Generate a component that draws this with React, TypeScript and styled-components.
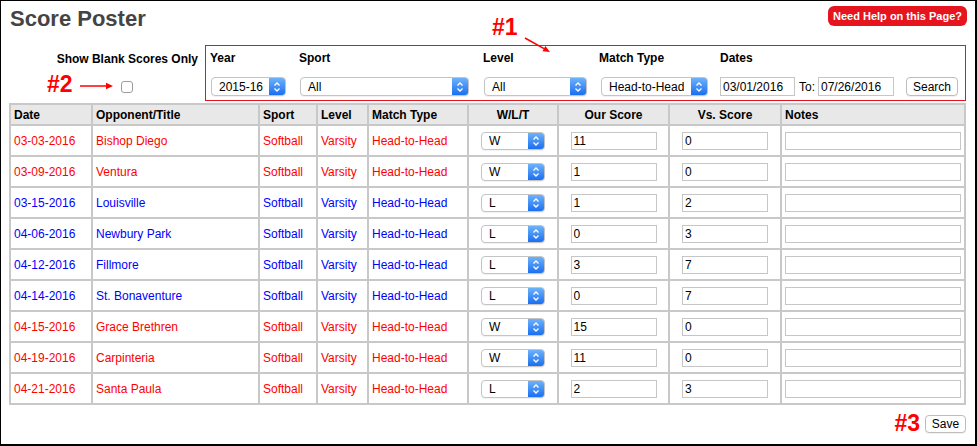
import React from 'react';
import styled, { createGlobalStyle } from 'styled-components';

const GlobalStyle = createGlobalStyle`
  html, body { margin: 0; padding: 0; background: #fff; }
  body { font-family: "Liberation Sans", Arial, Helvetica, sans-serif; color: #000; }
  * { box-sizing: border-box; }
`;

const FONT = `"Liberation Sans", Arial, Helvetica, sans-serif`;

const Frame = styled.div`
  position: relative;
  width: 977px;
  height: 446px;
  border: 1px solid #000;
  border-right-width: 2px;
  border-bottom-width: 2px;
  padding: 0 9px 0 8px;
  overflow: hidden;
`;

const TopBar = styled.div`
  display: flex;
  justify-content: space-between;
  align-items: flex-start;
  height: 44px;
`;

const Title = styled.h1`
  margin: 5px 0 0 1px;
  font-size: 22px;
  line-height: 26px;
  font-weight: bold;
  color: #444;
`;

const HelpButton = styled.button`
  margin: 5px -1px 0 0;
  height: 20px;
  padding: 0 5px;
  border: none;
  border-radius: 6px;
  background: #e6141e;
  color: #fff;
  font: bold 11px ${FONT};
  cursor: pointer;
`;

const FilterRow = styled.div`
  display: flex;
  height: 56px;
`;

const BlankBlock = styled.div`
  width: 196px;
  display: flex;
  justify-content: flex-end;
  padding-right: 7px;
`;

const BlankInner = styled.div`
  display: flex;
  flex-direction: column;
  align-items: center;
  padding-top: 7px;
`;

const BoldLabel = styled.label`
  font-weight: bold;
  font-size: 12px;
  line-height: 14px;
  height: 14px;
  white-space: nowrap;
`;

const Checkbox = styled.input`
  appearance: none;
  -webkit-appearance: none;
  width: 12px;
  height: 12px;
  margin: 15px 0 0;
  border: 1px solid #9c9c9c;
  border-radius: 3px;
  background: #fff;
`;

const FilterBox = styled.div`
  flex: 1;
  border: 1px solid #e6141e;
  padding: 5px 0 0 4px;
  display: flex;
  align-items: flex-start;
`;

const Field = styled.div<{ $w?: number }>`
  ${(p) => (p.$w ? `width: ${p.$w}px;` : 'flex: 1;')}
  display: flex;
  flex-direction: column;
  gap: 12px;
`;

const Controls = styled.div`
  display: flex;
  align-items: center;
  height: 19px;
`;

const SelectWrap = styled.span<{ $w: number; $h?: number; $ml?: number }>`
  display: inline-flex;
  width: ${(p) => p.$w}px;
  height: ${(p) => p.$h ?? 19}px;
  margin-left: ${(p) => p.$ml ?? 0}px;
  border: 1px solid #c4c4c4;
  border-radius: 4px;
  background: #fff;
  overflow: hidden;
  box-shadow: 0 1px 1px rgba(0, 0, 0, 0.06);
`;

const NativeSelect = styled.select`
  appearance: none;
  -webkit-appearance: none;
  flex: 1;
  min-width: 0;
  height: 100%;
  margin: 0;
  padding: 0 0 0 7px;
  border: none;
  background: transparent;
  font: 12px ${FONT};
  color: #000;
  outline: none;
`;

const SelectArrow = styled.span`
  flex: none;
  width: 16px;
  display: flex;
  align-items: center;
  justify-content: center;
  background: linear-gradient(#6db2fa, #1b6ff2);
`;

const TextInput = styled.input<{ $w?: number; $h?: number }>`
  width: ${(p) => (p.$w ? `${p.$w}px` : '100%')};
  height: ${(p) => p.$h ?? 19}px;
  margin: 0;
  padding: 0 2px;
  border: 1px solid #c6c6c6;
  background: #fff;
  font: 12px ${FONT};
  color: #000;
  outline: none;
`;

const ToText = styled.span`
  font-size: 12px;
  margin: 0 3px 0 4px;
`;

const PlainButton = styled.button<{ $w: number; $h: number; $ml?: number }>`
  width: ${(p) => p.$w}px;
  height: ${(p) => p.$h}px;
  margin-left: ${(p) => p.$ml ?? 0}px;
  padding: 0;
  border: 1px solid #bdbdbd;
  border-radius: 4px;
  background: #fff;
  font: 12px ${FONT};
  color: #000;
  box-shadow: 0 1px 1px rgba(0, 0, 0, 0.06);
`;

const Table = styled.table`
  width: 957px;
  margin-top: 2px;
  border-collapse: separate;
  border-spacing: 0;
  border: 1px solid #c8c8c8;
  table-layout: fixed;
  font-size: 12px;
`;

const Th = styled.th<{ $w: number; $center?: boolean }>`
  width: ${(p) => p.$w}px;
  height: 21px;
  padding: 0 3px;
  border: 1px solid #c8c8c8;
  background: #e8e8e8;
  text-align: ${(p) => (p.$center ? 'center' : 'left')};
  font-weight: bold;
  font-size: 12px;
  white-space: nowrap;
`;

const Td = styled.td<{ $color?: string }>`
  height: 31px;
  padding: 0 3px;
  border: 1px solid #c8c8c8;
  color: ${(p) => p.$color ?? '#000'};
  text-align: left;
  vertical-align: middle;
  white-space: nowrap;
`;

const CellInner = styled.div`
  display: flex;
  justify-content: center;
  align-items: center;
`;

const Footer = styled.div`
  display: flex;
  justify-content: flex-end;
  align-items: center;
  margin-top: 7px;
`;

const Marker = styled.span`
  font: bold 23px/23px ${FONT};
  color: #ff0000;
  margin-right: 5px;
`;

const Annotation = styled.div<{ $x: number; $y: number }>`
  position: absolute;
  left: ${(p) => p.$x}px;
  top: ${(p) => p.$y}px;
  font: bold 23px/23px ${FONT};
  color: #ff0000;
`;

const Arrow = styled.svg<{ $x: number; $y: number }>`
  position: absolute;
  left: ${(p) => p.$x}px;
  top: ${(p) => p.$y}px;
`;

const Chevrons = () => (
  <svg width="8" height="12" viewBox="0 0 8 12">
    <path d="M1.5 4.5 L4 2 L6.5 4.5 M1.5 7.5 L4 10 L6.5 7.5" fill="none" stroke="#fff" strokeWidth="1.3" />
  </svg>
);

type SelectProps = { w: number; h?: number; ml?: number; value: string; options: string[] };
const MacSelect = ({ w, h, ml, value, options }: SelectProps) => (
  <SelectWrap $w={w} $h={h} $ml={ml}>
    <NativeSelect defaultValue={value}>
      {options.map((o) => (
        <option key={o}>{o}</option>
      ))}
    </NativeSelect>
    <SelectArrow>
      <Chevrons />
    </SelectArrow>
  </SelectWrap>
);

const RED = '#ff0000';
const BLUE = '#0000ff';

const rows = [
  { date: '03-03-2016', opp: 'Bishop Diego', r: 'W', our: '11', vs: '0', c: RED },
  { date: '03-09-2016', opp: 'Ventura', r: 'W', our: '1', vs: '0', c: RED },
  { date: '03-15-2016', opp: 'Louisville', r: 'L', our: '1', vs: '2', c: BLUE },
  { date: '04-06-2016', opp: 'Newbury Park', r: 'L', our: '0', vs: '3', c: BLUE },
  { date: '04-12-2016', opp: 'Fillmore', r: 'L', our: '3', vs: '7', c: BLUE },
  { date: '04-14-2016', opp: 'St. Bonaventure', r: 'L', our: '0', vs: '7', c: BLUE },
  { date: '04-15-2016', opp: 'Grace Brethren', r: 'W', our: '15', vs: '0', c: RED },
  { date: '04-19-2016', opp: 'Carpinteria', r: 'W', our: '11', vs: '0', c: RED },
  { date: '04-21-2016', opp: 'Santa Paula', r: 'L', our: '2', vs: '3', c: RED },
];

export default function App() {
  return (
    <>
      <GlobalStyle />
      <Frame>
        <TopBar>
          <Title>Score Poster</Title>
          <HelpButton>Need Help on this Page?</HelpButton>
        </TopBar>

        <FilterRow>
          <BlankBlock>
            <BlankInner>
              <BoldLabel htmlFor="blank">Show Blank Scores Only</BoldLabel>
              <Checkbox id="blank" type="checkbox" />
            </BlankInner>
          </BlankBlock>
          <FilterBox>
            <Field $w={89}>
              <BoldLabel>Year</BoldLabel>
              <Controls>
                <MacSelect w={75} ml={1} value="2015-16" options={['2015-16', '2014-15', '2016-17']} />
              </Controls>
            </Field>
            <Field $w={184}>
              <BoldLabel>Sport</BoldLabel>
              <Controls>
                <MacSelect w={169} ml={1} value="All" options={['All', 'Softball', 'Baseball']} />
              </Controls>
            </Field>
            <Field $w={116}>
              <BoldLabel>Level</BoldLabel>
              <Controls>
                <MacSelect w={103} ml={1} value="All" options={['All', 'Varsity', 'JV']} />
              </Controls>
            </Field>
            <Field $w={121}>
              <BoldLabel>Match Type</BoldLabel>
              <Controls>
                <MacSelect w={107} ml={2} value="Head-to-Head" options={['Head-to-Head', 'Tournament']} />
              </Controls>
            </Field>
            <Field>
              <BoldLabel>Dates</BoldLabel>
              <Controls>
                <TextInput $w={75} defaultValue="03/01/2016" />
                <ToText>To:</ToText>
                <TextInput $w={76} defaultValue="07/26/2016" />
                <PlainButton $w={52} $h={19} $ml={12}>Search</PlainButton>
              </Controls>
            </Field>
          </FilterBox>
        </FilterRow>

        <Table>
          <thead>
            <tr>
              <Th $w={82}>Date</Th>
              <Th $w={167}>Opponent/Title</Th>
              <Th $w={58}>Sport</Th>
              <Th $w={51}>Level</Th>
              <Th $w={100}>Match Type</Th>
              <Th $w={90} $center>W/L/T</Th>
              <Th $w={111} $center>Our Score</Th>
              <Th $w={112} $center>Vs. Score</Th>
              <Th $w={184}>Notes</Th>
            </tr>
          </thead>
          <tbody>
            {rows.map((row) => (
              <tr key={row.date}>
                <Td $color={row.c}>{row.date}</Td>
                <Td $color={row.c}>{row.opp}</Td>
                <Td $color={row.c}>Softball</Td>
                <Td $color={row.c}>Varsity</Td>
                <Td $color={row.c}>Head-to-Head</Td>
                <Td>
                  <CellInner>
                    <MacSelect w={64} h={18} value={row.r} options={['W', 'L', 'T']} />
                  </CellInner>
                </Td>
                <Td>
                  <CellInner>
                    <TextInput $w={86} $h={18} defaultValue={row.our} />
                  </CellInner>
                </Td>
                <Td>
                  <CellInner>
                    <TextInput $w={86} $h={18} defaultValue={row.vs} />
                  </CellInner>
                </Td>
                <Td>
                  <TextInput $h={18} defaultValue="" />
                </Td>
              </tr>
            ))}
          </tbody>
        </Table>

        <Footer>
          <Marker>#3</Marker>
          <PlainButton $w={41} $h={18}>Save</PlainButton>
        </Footer>

        <Annotation $x={491} $y={15}>#1</Annotation>
        <Arrow $x={522} $y={34} width="32" height="22" viewBox="0 0 32 22">
          <line x1="2" y1="3" x2="21" y2="13.6" stroke="#ff0000" strokeWidth="1.5" />
          <polygon points="27,17 19.4,16.2 22.4,11" fill="#ff0000" />
        </Arrow>

        <Annotation $x={46} $y={72}>#2</Annotation>
        <Arrow $x={79} $y={80} width="34" height="10" viewBox="0 0 34 10">
          <line x1="0" y1="5" x2="27" y2="5" stroke="#ff0000" strokeWidth="1.5" />
          <polygon points="33,5 26,1.8 26,8.2" fill="#ff0000" />
        </Arrow>
      </Frame>
    </>
  );
}
